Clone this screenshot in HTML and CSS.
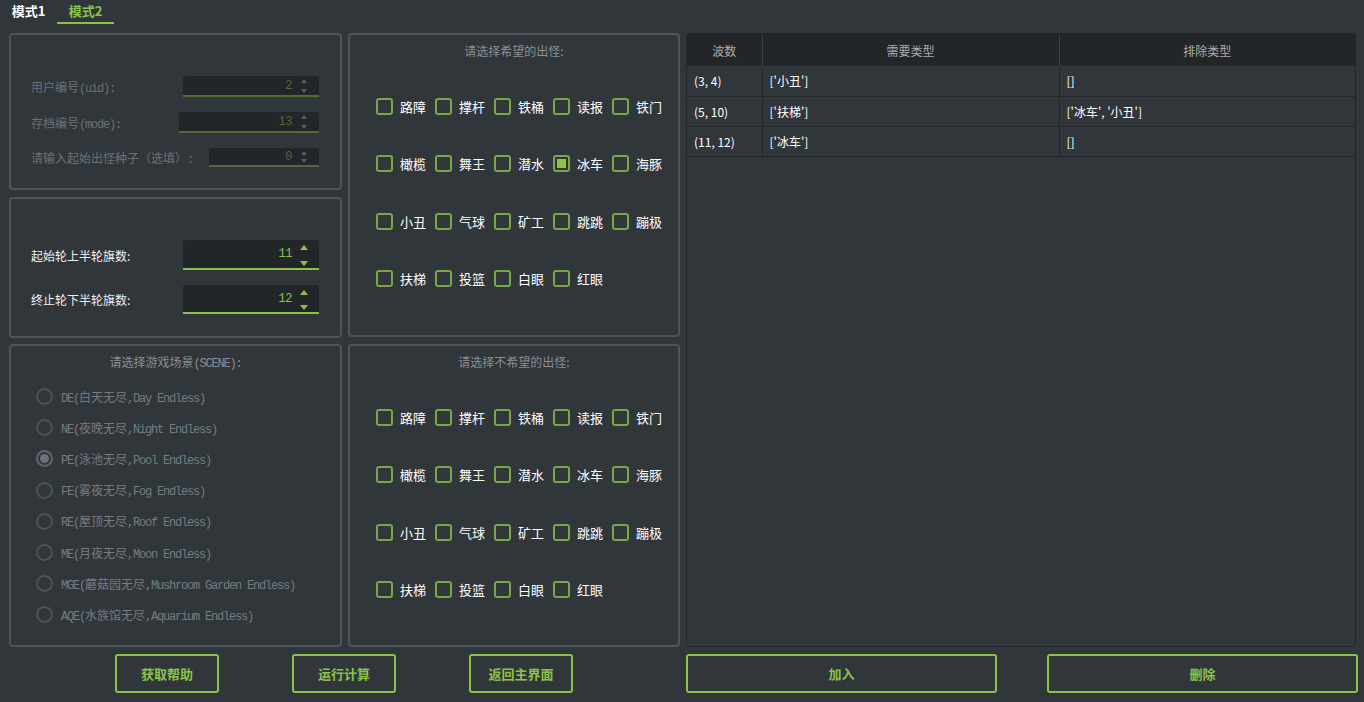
FILE: index.html
```html
<!DOCTYPE html>
<html lang="zh">
<head>
<meta charset="utf-8">
<title>模式2</title>
<link rel="stylesheet" href="styles.css">
</head>
<body>
<div class="tabs">
  <div class="tab">模式1</div>
  <div class="tab active">模式2</div>
</div>
<div class="main">
  <div class="col">
    <section class="panel p-ids">
      <div class="frow">
        <span class="flabel dis">用户编号<span class="en">(uid):</span></span>
        <div class="spin small dis w136"><span class="val">2</span><span class="arrows"><i class="up"></i><i class="down"></i></span></div>
      </div>
      <div class="frow">
        <span class="flabel dis">存档编号<span class="en">(mode):</span></span>
        <div class="spin small dis w140"><span class="val">13</span><span class="arrows"><i class="up"></i><i class="down"></i></span></div>
      </div>
      <div class="frow">
        <span class="flabel dis">请输入起始出怪种子（选填）<span class="en">:</span></span>
        <div class="spin small dis w110 h19"><span class="val">0</span><span class="arrows"><i class="up"></i><i class="down"></i></span></div>
      </div>
    </section>
    <section class="panel p-flags">
      <div class="frow">
        <span class="flabel">起始轮上半轮旗数:</span>
        <div class="spin big w136"><span class="val">11</span><span class="arrows"><i class="up"></i><i class="down"></i></span></div>
      </div>
      <div class="frow">
        <span class="flabel">终止轮下半轮旗数:</span>
        <div class="spin big w136 h29"><span class="val">12</span><span class="arrows"><i class="up"></i><i class="down"></i></span></div>
      </div>
    </section>
    <section class="panel p-scene">
      <div class="ptitle">请选择游戏场景<span class="en">(SCENE):</span></div>
      <div class="radios">
        <div class="radio"><span class="dot"></span><span class="rlabel"><span class="en">DE(</span>白天无尽<span class="en">,Day Endless)</span></span></div>
        <div class="radio"><span class="dot"></span><span class="rlabel"><span class="en">NE(</span>夜晚无尽<span class="en">,Night Endless)</span></span></div>
        <div class="radio"><span class="dot on"></span><span class="rlabel"><span class="en">PE(</span>泳池无尽<span class="en">,Pool Endless)</span></span></div>
        <div class="radio"><span class="dot"></span><span class="rlabel"><span class="en">FE(</span>雾夜无尽<span class="en">,Fog Endless)</span></span></div>
        <div class="radio"><span class="dot"></span><span class="rlabel"><span class="en">RE(</span>屋顶无尽<span class="en">,Roof Endless)</span></span></div>
        <div class="radio"><span class="dot"></span><span class="rlabel"><span class="en">ME(</span>月夜无尽<span class="en">,Moon Endless)</span></span></div>
        <div class="radio"><span class="dot"></span><span class="rlabel"><span class="en">MGE(</span>蘑菇园无尽<span class="en">,Mushroom Garden Endless)</span></span></div>
        <div class="radio"><span class="dot"></span><span class="rlabel"><span class="en">AQE(</span>水族馆无尽<span class="en">,Aquarium Endless)</span></span></div>
      </div>
    </section>
  </div>

  <div class="col">
    <section class="panel p-want">
      <div class="ptitle">请选择希望的出怪:</div>
      <div class="checks">
        <label class="cb"><span class="box"></span>路障</label>
        <label class="cb"><span class="box"></span>撑杆</label>
        <label class="cb"><span class="box"></span>铁桶</label>
        <label class="cb"><span class="box"></span>读报</label>
        <label class="cb"><span class="box"></span>铁门</label>
        <label class="cb"><span class="box"></span>橄榄</label>
        <label class="cb"><span class="box"></span>舞王</label>
        <label class="cb"><span class="box"></span>潜水</label>
        <label class="cb"><span class="box on"></span>冰车</label>
        <label class="cb"><span class="box"></span>海豚</label>
        <label class="cb"><span class="box"></span>小丑</label>
        <label class="cb"><span class="box"></span>气球</label>
        <label class="cb"><span class="box"></span>矿工</label>
        <label class="cb"><span class="box"></span>跳跳</label>
        <label class="cb"><span class="box"></span>蹦极</label>
        <label class="cb"><span class="box"></span>扶梯</label>
        <label class="cb"><span class="box"></span>投篮</label>
        <label class="cb"><span class="box"></span>白眼</label>
        <label class="cb"><span class="box"></span>红眼</label>
      </div>
    </section>
    <section class="panel p-nowant">
      <div class="ptitle">请选择不希望的出怪:</div>
      <div class="checks">
        <label class="cb"><span class="box"></span>路障</label>
        <label class="cb"><span class="box"></span>撑杆</label>
        <label class="cb"><span class="box"></span>铁桶</label>
        <label class="cb"><span class="box"></span>读报</label>
        <label class="cb"><span class="box"></span>铁门</label>
        <label class="cb"><span class="box"></span>橄榄</label>
        <label class="cb"><span class="box"></span>舞王</label>
        <label class="cb"><span class="box"></span>潜水</label>
        <label class="cb"><span class="box"></span>冰车</label>
        <label class="cb"><span class="box"></span>海豚</label>
        <label class="cb"><span class="box"></span>小丑</label>
        <label class="cb"><span class="box"></span>气球</label>
        <label class="cb"><span class="box"></span>矿工</label>
        <label class="cb"><span class="box"></span>跳跳</label>
        <label class="cb"><span class="box"></span>蹦极</label>
        <label class="cb"><span class="box"></span>扶梯</label>
        <label class="cb"><span class="box"></span>投篮</label>
        <label class="cb"><span class="box"></span>白眼</label>
        <label class="cb"><span class="box"></span>红眼</label>
      </div>
    </section>
  </div>

  <div class="tablewrap">
    <table>
      <colgroup><col class="c1"><col class="c2"><col class="c3"></colgroup>
      <thead>
        <tr><th>波数</th><th>需要类型</th><th>排除类型</th></tr>
      </thead>
      <tbody>
        <tr><td>(3, 4)</td><td>['小丑']</td><td>[]</td></tr>
        <tr><td>(5, 10)</td><td>['扶梯']</td><td>['冰车', '小丑']</td></tr>
        <tr><td>(11, 12)</td><td>['冰车']</td><td>[]</td></tr>
      </tbody>
    </table>
  </div>

  <div class="btns-left">
    <button class="btn">获取帮助</button>
    <button class="btn">运行计算</button>
    <button class="btn">返回主界面</button>
  </div>
  <div class="btns-right">
    <button class="btn">加入</button>
    <button class="btn">删除</button>
  </div>
</div>
</body>
</html>
```
FILE: styles.css
```css
* { box-sizing: border-box; margin: 0; padding: 0; }

body {
  background: #31363b;
  font-family: "Noto Sans CJK SC", "Noto Sans", sans-serif;
  font-size: 12px;
  color: #eff0f1;
  width: 1364px;
  height: 702px;
  overflow: hidden;
}

.tabs { display: flex; height: 24px; }
.tab {
  width: 57px;
  text-align: center;
  font-weight: bold;
  font-size: 13px;
  line-height: 22px;
  color: #ffffff;
}
.tab.active { color: #8bc34a; border-bottom: 2px solid #8bc34a; }

.main {
  display: grid;
  grid-template-columns: 333px 332px 670px;
  grid-template-rows: 614px 39px;
  column-gap: 6px;
  row-gap: 7px;
  margin: 9px 0 0 9px;
}

.col { display: flex; flex-direction: column; }

.panel {
  border: 2px solid #4d545a;
  border-radius: 4px;
}

.en { font-family: "Liberation Mono", monospace; letter-spacing: -1.2px; }

/* form rows */
.p-ids { height: 157px; padding: 41px 21px 0 20px; display: flex; flex-direction: column; gap: 15px; }
.p-flags { height: 141px; margin-top: 7px; padding: 41px 21px 0 20px; display: flex; flex-direction: column; gap: 15px; }
.p-scene { height: 303px; margin-top: 6px; padding-top: 7px; }

.frow { display: flex; justify-content: space-between; align-items: center; }
.flabel { font-size: 12px; color: #eff0f1; }
.flabel.dis { color: #6c7176; }

.spin {
  display: flex;
  justify-content: flex-end;
  align-items: stretch;
  background: #232629;
  border-bottom: 2px solid #8bc34a;
  border-radius: 3px 3px 0 0;
  height: 21px;
}
.spin.w136 { width: 136px; }
.spin.w140 { width: 140px; }
.spin.w110 { width: 110px; }
.spin.h19 { height: 19px; }
.spin.big { height: 30px; }
.spin.big.h29 { height: 29px; }
.spin .val {
  align-self: center;
  color: #8bc34a;
  font-size: 12px;
  font-family: "Liberation Mono", monospace;
  letter-spacing: -0.5px;
}
.spin .arrows {
  width: 14px;
  margin: 0 8px 0 5px;
  display: flex;
  flex-direction: column;
  align-items: center;
  justify-content: space-between;
  padding: 3px 0 2px;
}
.spin.big .arrows { padding: 5px 0 2px; }
.spin i { display: block; width: 0; height: 0; border-left: 3px solid transparent; border-right: 3px solid transparent; }
.spin i.up { border-bottom: 4px solid #8bc34a; }
.spin i.down { border-top: 4px solid #8bc34a; }
.spin.big i { border-left-width: 4px; border-right-width: 4px; }
.spin.big i.up { border-bottom-width: 5px; }
.spin.big i.down { border-top-width: 5px; }

.spin.dis { border-bottom-color: #506a3a; }
.spin.dis .val { color: #4f6a36; }
.spin.dis i.up { border-bottom-color: #555b60; }
.spin.dis i.down { border-top-color: #555b60; }

.ptitle {
  text-align: center;
  line-height: 18px;
  color: #8a8f93;
  font-size: 12px;
}

/* radios */
.radios { margin-top: 8px; padding-left: 25px; }
.radio { height: 31.2px; display: flex; align-items: center; }
.dot {
  width: 17px; height: 17px;
  border: 2px solid #4a5157;
  border-radius: 50%;
  margin-right: 8px;
  display: flex; align-items: center; justify-content: center;
}
.dot.on { border-color: #5f666c; }
.dot.on::after { content: ""; width: 9px; height: 9px; border-radius: 50%; background: #6a7177; }
.rlabel { color: #767b80; font-size: 12px; }

/* checkboxes */
.p-want { height: 304px; padding-top: 7px; }
.p-nowant { height: 303px; margin-top: 7px; padding-top: 7px; }
.checks {
  margin-top: 18px;
  padding-left: 26px;
  display: grid;
  grid-template-columns: repeat(5, 59px);
  grid-auto-rows: 57.3px;
}
.cb { display: flex; align-items: center; font-size: 13px; color: #ffffff; }
.box {
  width: 17px; height: 17px;
  border: 2px solid #76a845;
  border-radius: 3px;
  margin-right: 7px;
  display: flex; align-items: center; justify-content: center;
}
.box.on::after { content: ""; width: 9px; height: 9px; background: #8bc34a; }

/* table */
.tablewrap {
  grid-row: 1;
  grid-column: 3;
  border: 1px solid #232629;
  border-radius: 3px;
  overflow: hidden;
}
table { width: 100%; border-collapse: collapse; table-layout: fixed; }
col.c1 { width: 75px; }
col.c2 { width: 297px; }
th {
  background: #232629;
  height: 32px;
  font-weight: normal;
  color: #a9adb1;
  font-size: 12px;
  border-left: 1px solid #3a3f44;
}
th:first-child { border-left: none; }
td {
  height: 30px;
  padding-left: 7px;
  border-bottom: 1px solid #25282b;
  border-left: 1px solid #25282b;
  color: #ffffff;
  font-size: 12px;
}
td:first-child { border-left: none; }

/* buttons */
.btn {
  background: transparent;
  border: 2px solid #8bc34a;
  border-radius: 3px;
  color: #8bc34a;
  font-family: "Noto Sans CJK SC", sans-serif;
  font-weight: bold;
  font-size: 13px;
  height: 39px;
}
.btns-left {
  grid-column: 1 / 3;
  display: flex;
  gap: 73px;
  padding-left: 106px;
}
.btns-left .btn { width: 104px; }
.btns-right {
  display: grid;
  grid-template-columns: 311px 311px;
  column-gap: 50px;
}
```
